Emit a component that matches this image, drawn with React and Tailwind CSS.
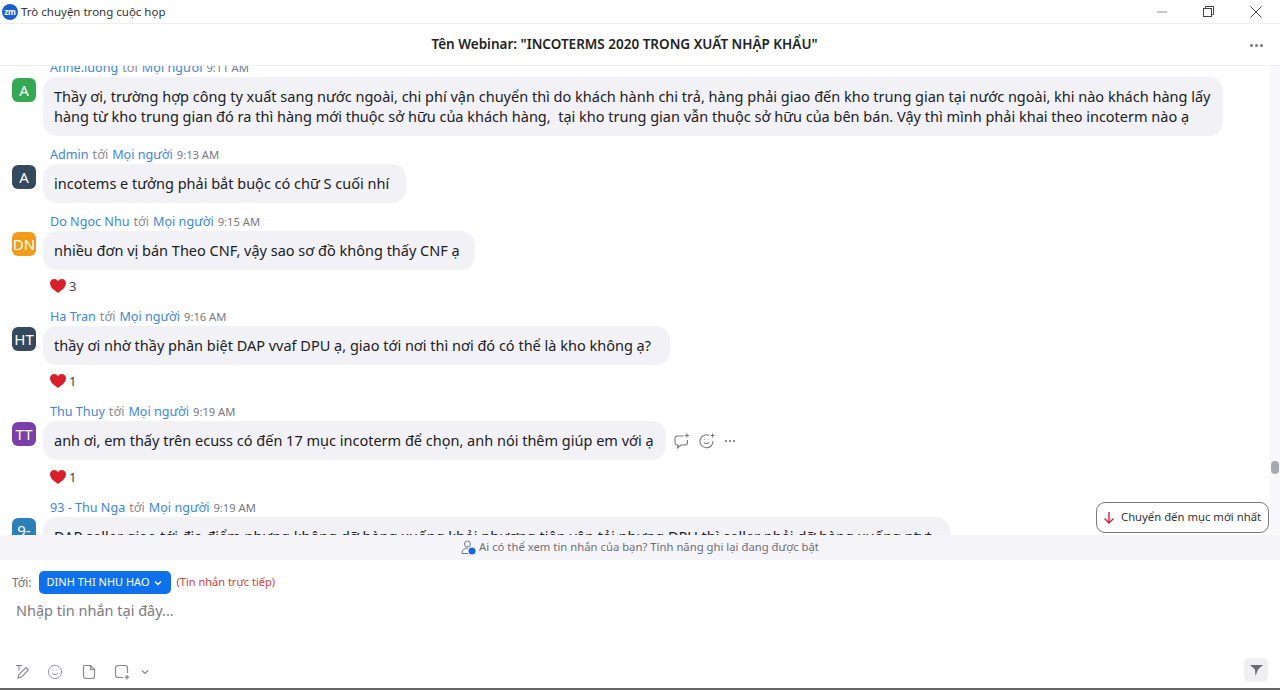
import React from "react";
import { Smile } from "lucide-react";

const messages = [
  {
    name: "Anne.luong",
    time: "9:11 AM",
    initials: "A",
    color: "bg-[#34a853]",
    pad: "pr-[13px]",
    lines: [
      "Thầy ơi, trường hợp công ty xuất sang nước ngoài, chi phí vận chuyển thì do khách hành chi trả, hàng phải giao đến kho trung gian tại nước ngoài, khi nào khách hàng lấy",
      "hàng từ kho trung gian đó ra thì hàng mới thuộc sở hữu của khách hàng,  tại kho trung gian vẫn thuộc sở hữu của bên bán. Vậy thì mình phải khai theo incoterm nào ạ",
    ],
  },
  {
    name: "Admin",
    time: "9:13 AM",
    initials: "A",
    color: "bg-[#34495e]",
    pad: "pr-[17px]",
    lines: ["incotems e tưởng phải bắt buộc có chữ S cuối nhí"],
  },
  {
    name: "Do Ngoc Nhu",
    time: "9:15 AM",
    initials: "DN",
    color: "bg-[#f09c1a]",
    pad: "pr-[15px]",
    lines: ["nhiều đơn vị bán Theo CNF, vậy sao sơ đồ không thấy CNF ạ"],
    hearts: 3,
  },
  {
    name: "Ha Tran",
    time: "9:16 AM",
    initials: "HT",
    color: "bg-[#34495e]",
    pad: "pr-[19px]",
    lines: ["thầy ơi nhờ thầy phân biệt DAP vvaf DPU ạ, giao tới nơi thì nơi đó có thể là kho không ạ?"],
    hearts: 1,
  },
  {
    name: "Thu Thuy",
    time: "9:19 AM",
    initials: "TT",
    color: "bg-[#7b3fa8]",
    pad: "pr-[12px]",
    lines: ["anh ơi, em thấy trên ecuss có đến 17 mục incoterm để chọn, anh nói thêm giúp em với ạ"],
    hearts: 1,
    actions: true,
  },
  {
    name: "93 - Thu Nga",
    time: "9:19 AM",
    initials: "9-",
    color: "bg-[#2d7fb8]",
    pad: "pr-[18px]",
    lines: ["DAP seller giao tới địa điểm nhưng không dỡ hàng xuống khỏi phương tiện vận tải nhưng DPU thì seller phải dỡ hàng xuống ptvt"],
  },
];

const Heart = () => (
  <svg width="16" height="14" viewBox="0 0 16 14">
    <path d="M8 14C5 11.6 0 8.6 0 4.2 0 1.7 1.9 0 4.1 0 5.7 0 7.2.8 8 2.2 8.800.8 10.300 0 11.900 0 14.100 0 16 1.700 16 4.200 16 8.600 11 11.600 8 14Z" fill="#d8202a" />
  </svg>
);

const Message = ({ msg }) => (
  <div className="pb-[10px]">
    <div className="pl-[50px] h-[18px] flex items-center text-[12.600px] leading-[18px] text-[#8a8a92] whitespace-nowrap">
      <span className="text-[#3d85d8]">{msg.name}</span>
      <span className="ml-1">tới</span>
      <span className="ml-1 text-[#3d85d8]">Mọi người</span>
      <span className="ml-1 text-[11.200px] text-[#77777f]">{msg.time}</span>
    </div>
    <div className="flex items-start">
      <div className={`${msg.color} ml-3 mt-[1px] w-6 h-6 rounded-md flex items-center justify-center text-white text-[15px] shrink-0`}>
        {msg.initials}
      </div>
      <div className={`${msg.pad} ml-[7px] pl-[11px] pt-[9px] pb-[10px] bg-[#f2f2f6] rounded-[14px] text-[14.500px] leading-5 text-[#202024] whitespace-nowrap`}>
        {msg.lines.map((line) => (
          <div key={line} className="whitespace-pre">{line}</div>
        ))}
      </div>
      {msg.actions && (
        <div className="ml-2 mt-3 flex items-center gap-[9px] text-[#77777f]">
          <svg width="16" height="16" viewBox="0 0 16 16" fill="none" stroke="currentColor" strokeWidth="1.1">
            <path d="M9.500 3H3.500A2.500 2.500 0 0 0 1 5.500v4A2.500 2.500 0 0 0 3.500 12H4l-.5 3 3.500-3h4A2.500 2.500 0 0 0 13.500 9.500V7" />
            <path d="M13 .5v4M11 2.500h4" />
          </svg>
          <svg width="16" height="16" viewBox="0 0 16 16" fill="none" stroke="currentColor" strokeWidth="1.1">
            <path d="M10 2.300A6.500 6.500 0 1 0 14 8" />
            <path d="M5 9.500c.7 1.400 4.300 1.400 5 0M5.500 6.300v.5M9.500 6.300v.5" />
            <path d="M13.500.5v4M11.500 2.500h4" />
          </svg>
          <span className="ml-[1px] flex gap-[2px]">
            <i className="w-[2px] h-[2px] bg-[#8a8a92]" />
            <i className="w-[2px] h-[2px] bg-[#8a8a92]" />
            <i className="w-[2px] h-[2px] bg-[#8a8a92]" />
          </span>
        </div>
      )}
    </div>
    {msg.hearts && (
      <div className={`${msg.actions ? "h-[29px] pt-[5px]" : "h-7 pt-[4px]"} pl-[50px] flex items-center gap-[3px] text-[13px] text-[#444]`}>
        <Heart />
        <span className="mt-[1px]">{msg.hearts}</span>
      </div>
    )}
  </div>
);

export default function App() {
  return (
    <div className="w-[1280px] h-[690px] overflow-hidden bg-white flex flex-col font-['Noto_Sans','Open_Sans',sans-serif]">
      {/* title bar */}
      <div className="h-[24px] shrink-0 flex items-center border-b border-[#eeeeee] pl-[2px]">
        <div className="w-[16px] h-[16px] rounded-full bg-[#1a5fd0] text-white text-[8px] font-bold flex items-center justify-center">zm</div>
        <span className="ml-[3px] text-[11.500px] text-[#333]">Trò chuyện trong cuộc họp</span>
        <div className="ml-auto flex items-center text-[#555]">
          <svg width="10" height="2" viewBox="0 0 10 2" className="mr-[36px]"><path d="M0 1h10" stroke="#a0a0a0" strokeWidth="1.200" /></svg>
          <svg width="11" height="11" viewBox="0 0 11 11" fill="none" stroke="#444" className="mr-[36px]">
            <rect x=".5" y="2.500" width="8" height="8" />
            <path d="M2.500 2.500V.5h8v8H8.500" />
          </svg>
          <svg width="12" height="12" viewBox="0 0 12 12" stroke="#444" className="mr-[18px]"><path d="M.5.5l11 11M11.500.5l-11 11" /></svg>
        </div>
      </div>

      {/* header */}
      <div className="h-[42px] shrink-0 relative flex items-center justify-center pr-[31px] border-b border-[#eeeeee]">
        <span className="text-[13.500px] font-semibold text-[#222]">Tên Webinar: "INCOTERMS 2020 TRONG XUẤT NHẬP KHẨU"</span>
        <span className="absolute right-[17px] top-[20px] flex gap-[2px]">
          <i className="w-[3px] h-[3px] rounded-full bg-[#777]" />
          <i className="w-[3px] h-[3px] rounded-full bg-[#777]" />
          <i className="w-[3px] h-[3px] rounded-full bg-[#777]" />
        </span>
      </div>

      {/* messages */}
      <div className="h-[469px] shrink-0 relative overflow-hidden">
        <div className="-mt-[7px]">
          {messages.map((msg, i) => (
            <Message key={i} msg={msg} />
          ))}
        </div>
        <div className="absolute right-0 top-0 bottom-0 w-[10px] bg-[#f8f8fa]">
          <div className="absolute left-[1px] top-[395px] w-2 h-[13px] rounded bg-[#a8a8b0]" />
        </div>
        <div className="absolute left-[1096px] top-[436px] w-[173px] h-[31px] bg-white border border-[#77777f] rounded-[9px] flex items-center pl-[6px] text-[11.300px] text-[#333] whitespace-nowrap">
          <svg width="12" height="13" viewBox="0 0 12 13" fill="none" stroke="#d4242c" strokeWidth="1.400" className="shrink-0"><path d="M6 1v11M1.500 7.500 6 12l4.500-4.500" /></svg>
          <span className="ml-[6px]">Chuyển đến mục mới nhất</span>
        </div>
      </div>

      {/* notice */}
      <div className="h-[25px] shrink-0 bg-[#f5f5f9] flex items-center justify-center text-[11.300px] text-[#6e6e76]">
        <svg width="16" height="15" viewBox="0 0 16 15" fill="none" className="mr-[2px]">
          <circle cx="6.500" cy="4" r="3" stroke="#77777f" />
          <path d="M1 13.500c0-4 3-5.500 6-5.500" stroke="#77777f" />
          <path d="M1 13.500h6" stroke="#77777f" />
          <circle cx="11" cy="11" r="3.500" fill="#1a66d8" />
        </svg>
        <span>Ai có thể xem tin nhắn của bạn? Tính năng ghi lại đang được bật</span>
      </div>

      {/* composer */}
      <div className="flex-1 flex flex-col relative border-b-2 border-[#666]">
        <div className="flex items-center h-[23px] mt-[11px] pl-3">
          <span className="text-[12px] text-[#6e6e76]">Tới:</span>
          <div className="ml-[7px] h-[23px] w-[132px] rounded-[5px] bg-[#0e71eb] text-white text-[11px] flex items-center pl-2 whitespace-nowrap">
            DINH THI NHU HAO
            <svg width="8" height="6" viewBox="0 0 8 6" fill="none" stroke="white" strokeWidth="1.400" className="ml-[4px]"><path d="M1 1.500 4 4.500 7 1.500" /></svg>
          </div>
          <span className="ml-[6px] text-[11px] text-[#d13c3c]">(Tin nhắn trực tiếp)</span>
        </div>
        <div className="pl-4 mt-[6px] text-[14.500px] leading-5 text-[#7a7a82]">Nhập tin nhắn tại đây...</div>
        <div className="mt-auto mb-[8px] pl-[15px] flex items-center text-[#86868e]">
          <svg width="16" height="16" viewBox="0 0 16 16" fill="none" stroke="currentColor" strokeWidth="1.100">
            <path d="M1 1.500h6M4 1.500v5" />
            <path d="M3 14l1-3.500 7-7 2.500 2.500-7 7z" />
          </svg>
          <Smile size={16} strokeWidth={1.300} className="ml-[16px]" />
          <svg width="16" height="16" viewBox="0 0 16 16" fill="none" stroke="currentColor" strokeWidth="1.200" className="ml-[18px]">
            <path d="M3.500 1.500h6l4 4v6.500a2.500 2.500 0 0 1-2.500 2.500H5A2.500 2.500 0 0 1 2.500 12V2.500a1 1 0 0 1 1-1Z" />
            <path d="M9.500 1.500v4h4" />
          </svg>
          <svg width="17" height="16" viewBox="0 0 17 16" fill="none" stroke="currentColor" strokeWidth="1.200" className="ml-[17px]">
            <path d="M9 13.500H4A2.500 2.500 0 0 1 1.500 11V4A2.500 2.500 0 0 1 4 1.500h7A2.500 2.500 0 0 1 13.500 4v5" />
            <path d="M13 11v4.500M10.800 13.200h4.500" />
          </svg>
          <svg width="8" height="6" viewBox="0 0 8 6" fill="none" stroke="currentColor" strokeWidth="1.200" className="ml-[10px]"><path d="M1 1.500 4 4.500 7 1.500" /></svg>
        </div>
        <div className="absolute right-[12px] bottom-[6px] w-6 h-6 rounded-md bg-[#f0f0f4] flex items-center justify-center">
          <svg width="13" height="11" viewBox="0 0 13 11"><path d="M0 0h13L8 4.500 5.500 11 5 4.500Z" fill="#6a6a72" /></svg>
        </div>
      </div>
    </div>
  );
}
